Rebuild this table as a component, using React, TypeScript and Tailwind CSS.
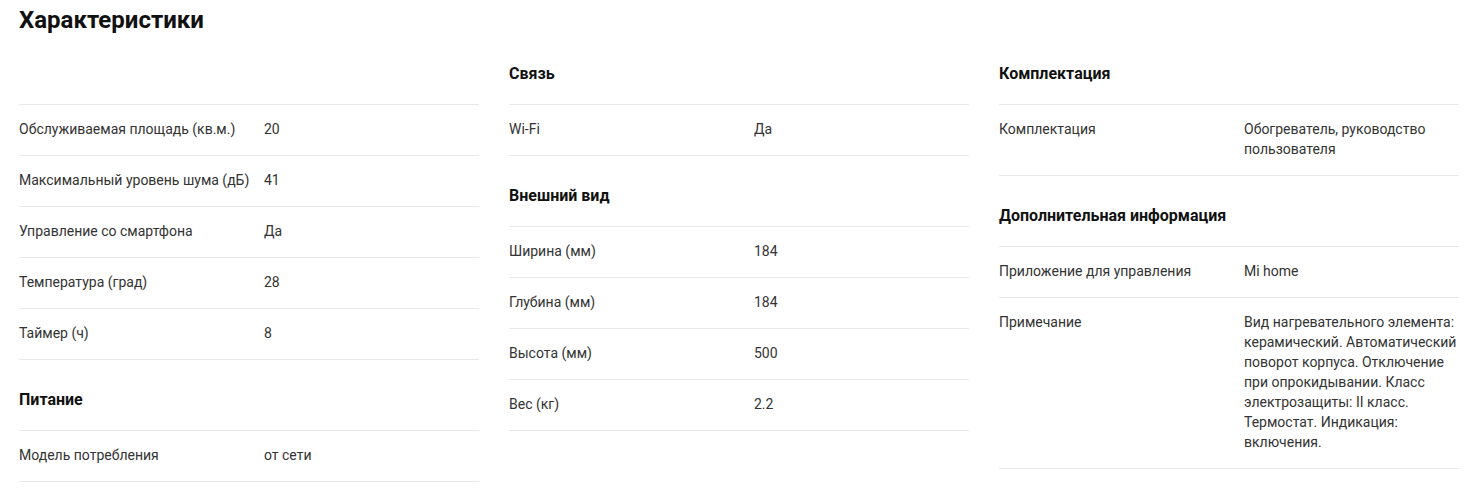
import React from "react";

type Row = { label: string; value: string };
type Section = { title: string; rows: Row[] };

const columns: Section[][] = [
  [
    {
      title: "",
      rows: [
        { label: "Обслуживаемая площадь (кв.м.)", value: "20" },
        { label: "Максимальный уровень шума (дБ)", value: "41" },
        { label: "Управление со смартфона", value: "Да" },
        { label: "Температура (град)", value: "28" },
        { label: "Таймер (ч)", value: "8" },
      ],
    },
    {
      title: "Питание",
      rows: [{ label: "Модель потребления", value: "от сети" }],
    },
  ],
  [
    { title: "Связь", rows: [{ label: "Wi-Fi", value: "Да" }] },
    {
      title: "Внешний вид",
      rows: [
        { label: "Ширина (мм)", value: "184" },
        { label: "Глубина (мм)", value: "184" },
        { label: "Высота (мм)", value: "500" },
        { label: "Вес (кг)", value: "2.2" },
      ],
    },
  ],
  [
    {
      title: "Комплектация",
      rows: [{ label: "Комплектация", value: "Обогреватель, руководство пользователя" }],
    },
    {
      title: "Дополнительная информация",
      rows: [
        { label: "Приложение для управления", value: "Mi home" },
        {
          label: "Примечание",
          value:
            "Вид нагревательного элемента: керамический. Автоматический поворот корпуса. Отключение при опрокидывании. Класс электрозащиты: II класс. Термостат. Индикация: включения.",
        },
      ],
    },
  ],
];

export default function App() {
  return (
    <div className="min-h-[492px] bg-white pl-[19px] pr-[18px] font-['Roboto','Liberation_Sans',sans-serif]">
      <h2 className="pt-[7px] text-[24px] font-bold leading-[27px] text-[#111]">Характеристики</h2>
      <div className="grid grid-cols-3 gap-x-[30px]">
        {columns.map((sections, ci) => (
          <div key={ci} className="flex flex-col">
            {sections.map((s, si) => (
              <div key={si}>
                <div className="h-[71px] border-b border-[#e8e8e8] pt-[30px] text-[16px] font-bold leading-[20px] text-[#111]">
                  {s.title}
                </div>
                {s.rows.map((r, ri) => (
                  <div
                    key={ri}
                    className="flex border-b border-[#e8e8e8] pt-[14px] pb-[16px] text-[14px] leading-[20px] text-[#333]"
                  >
                    <div className="w-[245px] shrink-0">{r.label}</div>
                    <div className="w-[215px]">{r.value}</div>
                  </div>
                ))}
              </div>
            ))}
          </div>
        ))}
      </div>
    </div>
  );
}
